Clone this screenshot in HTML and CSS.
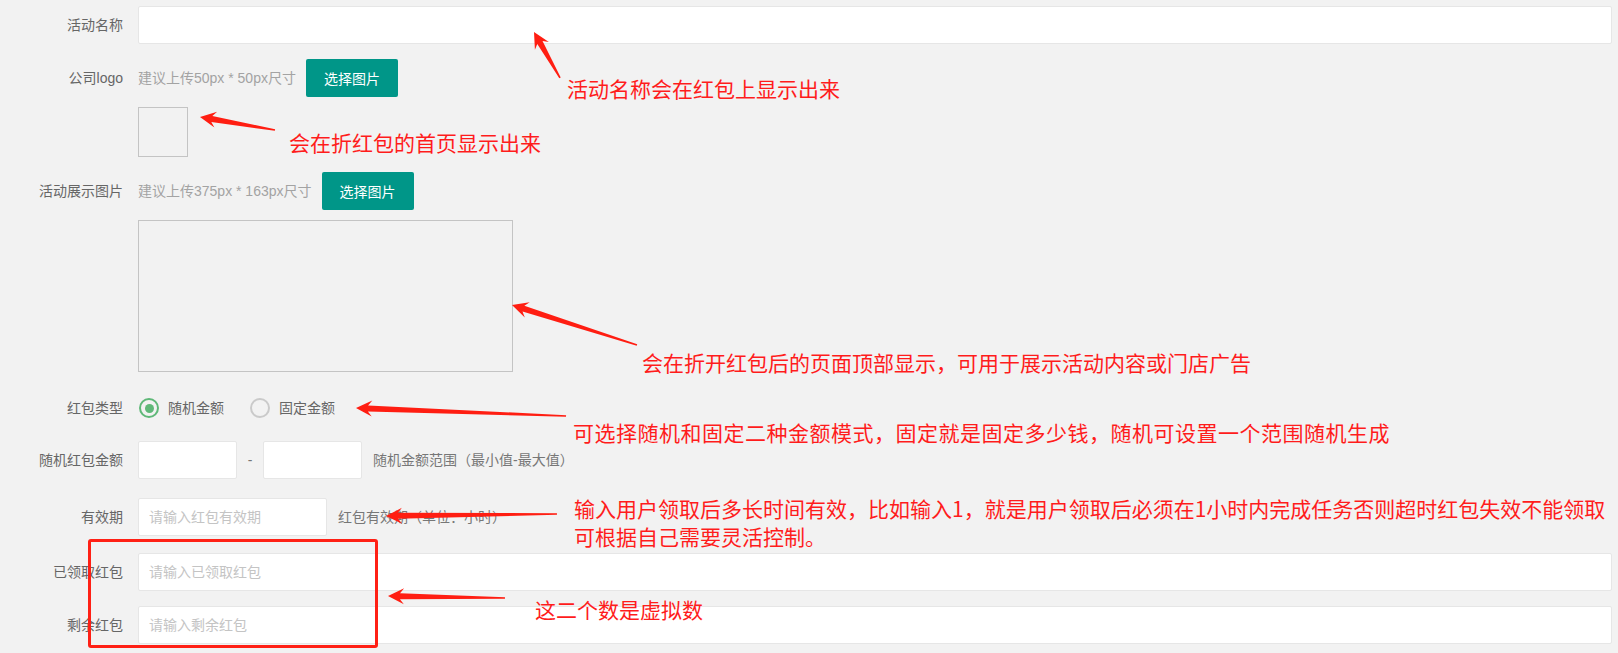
FILE: index.html
```html
<!DOCTYPE html>
<html lang="zh-CN">
<head>
<meta charset="utf-8">
<title>红包活动设置</title>
<link rel="stylesheet" href="styles.css">
</head>
<body>
<div class="page">
  <form class="form">
    <div class="row">
      <label class="label">活动名称</label>
      <div class="block"><input class="input" type="text"></div>
    </div>
    <div class="row mb10">
      <label class="label">公司logo</label>
      <div class="block"><span class="mid">建议上传50px * 50px尺寸</span><button type="button" class="btn">选择图片</button></div>
    </div>
    <div class="row">
      <div class="label"></div>
      <div class="block"><div class="thumb thumb-logo"></div></div>
    </div>
    <div class="row mb10">
      <label class="label">活动展示图片</label>
      <div class="block"><span class="mid">建议上传375px * 163px尺寸</span><button type="button" class="btn">选择图片</button></div>
    </div>
    <div class="row mb17">
      <div class="label"></div>
      <div class="block"><div class="thumb thumb-banner"></div></div>
    </div>
    <div class="row mb14">
      <label class="label">红包类型</label>
      <div class="block">
        <span class="radio"><span class="dot checked"></span><span class="radio-text">随机金额</span></span>
        <span class="radio"><span class="dot"></span><span class="radio-text">固定金额</span></span>
      </div>
    </div>
    <div class="row mb19">
      <label class="label">随机红包金额</label>
      <div class="block">
        <input class="input input-small" type="text">
        <span class="dash">-</span>
        <input class="input input-small" type="text">
        <span class="aux">随机金额范围（最小值-最大值）</span>
      </div>
    </div>
    <div class="row mb17">
      <label class="label">有效期</label>
      <div class="block">
        <input class="input input-mid" type="text" placeholder="请输入红包有效期">
        <span class="aux">红包有效期（单位：小时）</span>
      </div>
    </div>
    <div class="row">
      <label class="label">已领取红包</label>
      <div class="block"><input class="input" type="text" placeholder="请输入已领取红包"></div>
    </div>
    <div class="row">
      <label class="label">剩余红包</label>
      <div class="block"><input class="input" type="text" placeholder="请输入剩余红包"></div>
    </div>
  </form>

  <div class="notes">
    <svg class="arrows" width="1618" height="653" viewBox="0 0 1618 653">
      <g transform="translate(534 32) rotate(60.5)"><polygon points="52.8,-0.8 12,-3 16,-8 0,0 16,8 12,3 52.8,0.8"/></g>
      <g transform="translate(200 117) rotate(9.83)"><polygon points="76.1,-0.8 12,-3 16,-8 0,0 16,8 12,3 76.1,0.8"/></g>
      <g transform="translate(512 305) rotate(17.74)"><polygon points="131.2,-0.8 12,-3 16,-8 0,0 16,8 12,3 131.2,0.8"/></g>
      <g transform="translate(356 408) rotate(2.18)"><polygon points="210.2,-0.8 12,-3 16,-8 0,0 16,8 12,3 210.2,0.8"/></g>
      <g transform="translate(386 516) rotate(-0.67)"><polygon points="171,-0.8 12,-3 16,-8 0,0 16,8 12,3 171,0.8"/></g>
      <g transform="translate(388 596) rotate(0.98)"><polygon points="117,-0.8 12,-3 16,-8 0,0 16,8 12,3 117,0.8"/></g>
    </svg>
    <div class="note n1">活动名称会在红包上显示出来</div>
    <div class="note n2">会在折红包的首页显示出来</div>
    <div class="note n3">会在折开红包后的页面顶部显示，可用于展示活动内容或门店广告</div>
    <div class="note n4">可选择随机和固定二种金额模式，固定就是固定多少钱，随机可设置一个范围随机生成</div>
    <div class="note n5"><span class="l1">输入用户领取后多长时间有效，比如输入1，就是用户领取后必须在1小时内完成任务否则超时红包失效不能领取</span><br>可根据自己需要灵活控制。</div>
    <div class="note n6">这二个数是虚拟数</div>
    <div class="frame"></div>
  </div>
</div>
</body>
</html>
```

FILE: styles.css
```css
* { box-sizing: border-box; }

html, body {
  margin: 0;
  padding: 0;
  background: #f2f2f2;
  overflow: hidden;
}

body {
  font-family: "Liberation Sans", "Noto Sans CJK SC", sans-serif;
  font-size: 14px;
  color: #666;
}

.page {
  position: relative;
  width: 1618px;
  height: 653px;
}

.form {
  padding: 6px 6px 0 0;
  margin: 0;
}

.row {
  display: flex;
  align-items: center;
  margin-bottom: 15px;
}
.mb10 { margin-bottom: 10px; }
.mb14 { margin-bottom: 14px; }
.mb17 { margin-bottom: 17px; }
.mb19 { margin-bottom: 19px; }

.label {
  flex: 0 0 138px;
  width: 138px;
  padding-right: 15px;
  text-align: right;
  line-height: 20px;
  color: #666;
}

.block {
  flex: 1;
  display: flex;
  align-items: center;
  min-height: 38px;
}

.input {
  flex: 1;
  height: 38px;
  border: 1px solid #e6e6e6;
  border-radius: 2px;
  background: #fff;
  padding: 0 10px;
  font: inherit;
  font-size: 14px;
  color: #333;
  outline: none;
}
.input::placeholder { color: #c4c4c4; }

.input-small { flex: 0 0 99px; width: 99px; }
.input-mid { flex: 0 0 189px; width: 189px; }

.dash {
  width: 26px;
  text-align: center;
  color: #777;
}

.aux {
  margin-left: 11px;
  color: #777;
  line-height: 20px;
}

.mid {
  color: #a3a3a3;
  line-height: 20px;
  margin-right: 10px;
}

.btn {
  height: 38px;
  padding: 0 18px;
  border: none;
  border-radius: 2px;
  background: #009688;
  color: #fff;
  font: inherit;
  font-size: 14px;
  cursor: pointer;
}

.thumb {
  border: 1px solid #c4c4c4;
  background: transparent;
}
.thumb-logo { width: 50px; height: 50px; }
.thumb-banner { width: 375px; height: 152px; }

.radio {
  display: flex;
  align-items: center;
  margin-right: 25px;
}
.dot {
  position: relative;
  width: 20px;
  height: 20px;
  margin: 0 9px 0 1px;
  border: 2px solid #cacaca;
  border-radius: 50%;
}
.dot.checked { border-color: #5fb878; }
.dot.checked::after {
  content: "";
  position: absolute;
  left: 3.5px;
  top: 3.5px;
  width: 9px;
  height: 9px;
  border-radius: 50%;
  background: #5fb878;
}
.radio-text { color: #666; line-height: 20px; }

/* annotation overlay */
.notes {
  position: absolute;
  left: 0;
  top: 0;
  width: 1618px;
  height: 653px;
  pointer-events: none;
}
.arrows {
  position: absolute;
  left: 0;
  top: 0;
}
.arrows polygon { fill: #ff1e12; }

.note {
  position: absolute;
  font-family: "Noto Sans CJK SC", sans-serif;
  font-size: 21px;
  line-height: 28px;
  color: #ff1c1c;
  white-space: nowrap;
}
.n1 { left: 567px; top: 74px; }
.n2 { left: 289px; top: 128px; }
.n3 { left: 642px; top: 348px; }
.n4 { left: 573px; top: 418px; letter-spacing: 0.5px; }
.n5 { left: 574px; top: 494px; }
.n5 .l1 { letter-spacing: 0; }
.n6 { left: 535px; top: 595px; }

.frame {
  position: absolute;
  left: 88px;
  top: 539px;
  width: 290px;
  height: 109px;
  border: 3px solid #ff2015;
  border-radius: 3px;
}
```
